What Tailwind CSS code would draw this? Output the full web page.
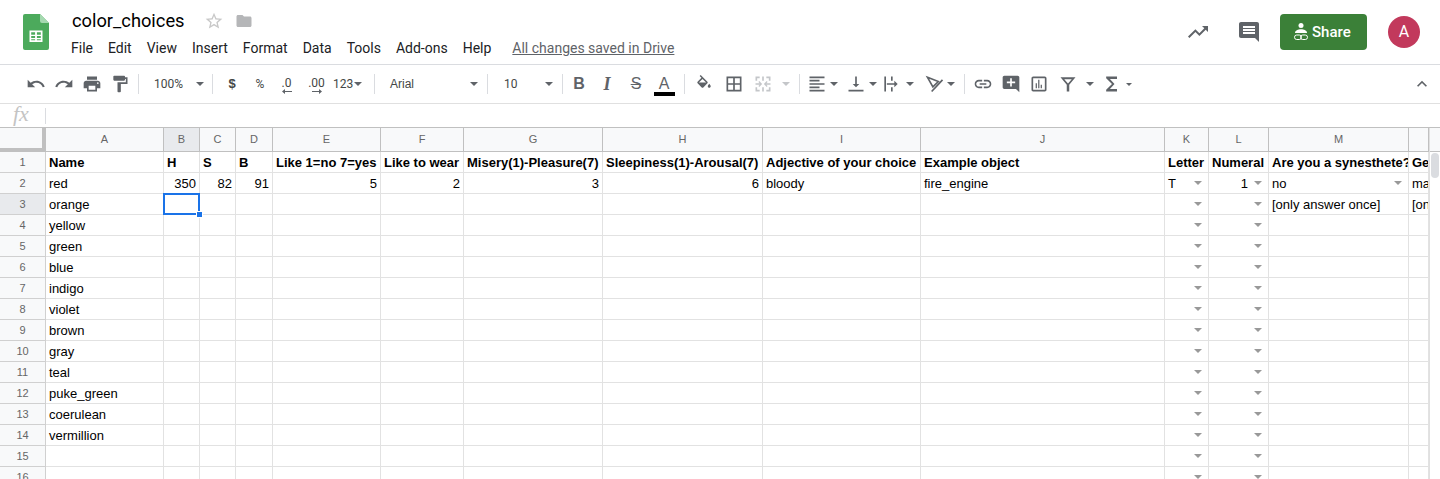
<!DOCTYPE html>
<html lang="en">
<head>
  <meta charset="UTF-8" />
  <title>color_choices</title>
  <script src="https://cdn.jsdelivr.net/npm/@tailwindcss/browser@4"></script>
</head>
<body class="bg-white h-[479px] overflow-hidden font-['Roboto',sans-serif]">

  <!-- title bar -->
  <header class="h-[65px] flex border-b border-[#dadce0]">
    <div class="w-[71px] pl-[23px] pt-[14px] shrink-0">
      <svg width="26" height="36" viewBox="0 0 26 36">
        <path d="M2 0H17L26 9V34a2 2 0 0 1-2 2H2a2 2 0 0 1-2-2V2a2 2 0 0 1 2-2z" fill="#4caa5c"/>
        <path d="M17 0L26 9H19a2 2 0 0 1-2-2z" fill="#a5d9b0"/>
        <path d="M6.5 16.5H19.5V28H6.5zM8.200 18.200V20.800H12.100V18.200zM13.900 18.200V20.800H17.800V18.200zM8.200 22V24H12.100V22zM13.900 22V24H17.800V22zM8.200 25.200V26.300H12.100V25.200zM13.900 25.200V26.300H17.800V25.200z" fill="#fff" fill-rule="evenodd"/>
      </svg>
    </div>
    <div class="flex-1">
      <div class="h-[25px] mt-[8px] flex items-center pl-[1px]">
        <span class="text-[18.3px] text-black w-[132px]">color_choices</span>
        <svg class="w-[20px] h-[20px] mr-[11px]" viewBox="0 0 24 24" fill="#c8c8c8"><path d="M22 9.240l-7.190-.620L12 2 9.190 8.630 2 9.240l5.460 4.730L5.820 21 12 17.270 18.180 21l-1.630-7.030L22 9.240zM12 15.400l-3.760 2.270 1-4.280-3.320-2.880 4.380-.380L12 6.100l1.710 4.040 4.380.380-3.320 2.880 1 4.280L12 15.400z"/></svg>
        <svg class="w-[18px] h-[18px]" viewBox="0 0 24 24" fill="#b5b6b8"><path d="M10 4H4c-1.100 0-2 .9-2 2v12c0 1.100.9 2 2 2h16c1.100 0 2-.9 2-2V8c0-1.100-.9-2-2-2h-8l-2-2z"/></svg>
      </div>
      <nav class="flex items-center gap-[15px] text-[14px] text-[#202124] h-[18px] mt-[6px]">
        <span>File</span><span>Edit</span><span>View</span><span>Insert</span><span>Format</span><span>Data</span><span>Tools</span><span>Add-ons</span><span>Help</span>
        <span class="ml-[6px] underline text-[#5f6368]">All changes saved in Drive</span>
      </nav>
    </div>
    <div class="flex items-center shrink-0 h-[64px]">
      <svg class="w-[24px] h-[24px] mr-[27px]" viewBox="0 0 24 24" fill="#5f6368"><path d="M16 6l2.290 2.290-4.880 4.880-4-4L2 16.590 3.410 18l6-6 4 4 6.300-6.290L22 12V6z"/></svg>
      <svg class="w-[24px] h-[24px] mr-[19px]" viewBox="0 0 24 24" fill="#5f6368"><path d="M21.990 4c0-1.100-.890-2-1.990-2H4c-1.100 0-2 .9-2 2v12c0 1.100.9 2 2 2h14l4 4-.010-18zM18 14H6v-2h12v2zm0-3H6V9h12v2zm0-3H6V6h12v2z"/></svg>
      <button class="w-[87px] h-[36px] rounded-[4px] bg-[#3b8038] text-white text-[15px] font-medium flex items-center pl-[12px] gap-[2px] mr-[21px]">
        <svg width="18" height="20" viewBox="0 0 18 20" fill="none">
          <circle cx="9" cy="3.500" r="2.500" fill="#fff"/>
          <path d="M3 11c0-2.500 3-3.700 6-3.700s6 1.200 6 3.700z" fill="#fff"/>
          <rect x="2.500" y="13" width="7" height="4.500" rx="2.200" stroke="#fff"/>
          <rect x="8.500" y="13" width="7" height="4.500" rx="2.200" stroke="#fff"/>
        </svg>
        Share
      </button>
      <div class="w-[32px] h-[32px] mr-[20px] rounded-full bg-[#c2395c] text-white text-[16px] flex items-center justify-center">A</div>
    </div>
  </header>

  <!-- toolbar -->
  <div class="h-[39px] pl-[22px] flex items-center border-b border-[#e0e0e0] text-[#444746] text-[12px]">
    <span class="w-[28px] flex justify-center"><svg class="w-[20px] h-[20px]" viewBox="0 0 24 24" fill="#5f6368"><path d="M12.500 8c-2.650 0-5.050.990-6.900 2.600L2 7v9h9l-3.620-3.620c1.390-1.160 3.160-1.880 5.120-1.880 3.540 0 6.550 2.310 7.600 5.500l2.370-.780C21.080 11.030 17.150 8 12.500 8z"/></svg></span>
    <span class="w-[28px] flex justify-center"><svg class="w-[20px] h-[20px]" viewBox="0 0 24 24" fill="#5f6368"><path d="M18.400 10.600C16.550 8.990 14.150 8 11.500 8c-4.650 0-8.580 3.030-9.960 7.220L3.900 16c1.050-3.190 4.050-5.500 7.600-5.500 1.950 0 3.730.720 5.120 1.880L13 16h9V7l-3.600 3.600z"/></svg></span>
    <span class="w-[28px] flex justify-center"><svg class="w-[20px] h-[20px]" viewBox="0 0 24 24" fill="#5f6368"><path d="M19 8H5c-1.660 0-3 1.340-3 3v6h4v4h12v-4h4v-6c0-1.660-1.340-3-3-3zm-3 11H8v-5h8v5zm3-7c-.550 0-1-.450-1-1s.450-1 1-1 1 .450 1 1-.450 1-1 1zm-1-9H6v4h12V3z"/></svg></span>
    <span class="w-[28px] flex justify-center"><svg class="w-[20px] h-[20px]" viewBox="0 0 24 24" fill="#5f6368"><path d="M18 4V3c0-.550-.450-1-1-1H5c-.550 0-1 .450-1 1v4c0 .550.450 1 1 1h12c.550 0 1-.450 1-1V6h1v4H9v11c0 .550.450 1 1 1h2c.550 0 1-.450 1-1v-9h8V4h-3z"/></svg></span>
    <i class="ml-[4px] w-px h-[20px] bg-[#dadce0]"></i>
    <span class="w-[73px] flex items-center justify-between pl-[15px] pr-[8px]"><span>100%</span><i class="w-0 h-0 border-x-[4px] border-x-transparent border-t-[4px] border-t-[#5f6368]"></i></span>
    <i class="w-px h-[20px] bg-[#dadce0]"></i>
    <span class="w-[32px] text-center ml-[3px] font-['Liberation_Sans',sans-serif] text-[13px] font-bold">$</span>
    <span class="w-[24px] text-center">%</span>
    <span class="w-[29px] flex flex-col items-center leading-[11px] pt-[3px]">.0<svg width="10" height="5" viewBox="0 0 10 5" fill="#5f6368"><path d="M0 2.500L3 0v2h7v1H3v2z"/></svg></span>
    <span class="w-[31px] flex flex-col items-center leading-[11px] pt-[3px]">.00<svg width="10" height="5" viewBox="0 0 10 5" fill="#5f6368"><path d="M10 2.500L7 0v2H0v1h7v2z"/></svg></span>
    <span class="w-[42px] flex items-center pl-[1px] gap-[1px]">123<i class="w-0 h-0 border-x-[4px] border-x-transparent border-t-[4px] border-t-[#5f6368]"></i></span>
    <i class="w-px h-[20px] bg-[#dadce0]"></i>
    <span class="w-[112px] flex items-center justify-between pl-[15px] pr-[9px] font-['Liberation_Sans',sans-serif]"><span>Arial</span><i class="w-0 h-0 border-x-[4px] border-x-transparent border-t-[4px] border-t-[#5f6368]"></i></span>
    <i class="w-px h-[20px] bg-[#dadce0]"></i>
    <span class="w-[74px] flex items-center justify-between pl-[16px] pr-[9px]"><span>10</span><i class="w-0 h-0 border-x-[4px] border-x-transparent border-t-[4px] border-t-[#5f6368]"></i></span>
    <i class="w-px h-[20px] bg-[#dadce0]"></i>
    <span class="w-[32px] text-center text-[#5f6368] font-['Liberation_Sans',sans-serif] font-bold text-[16px]">B</span>
    <span class="w-[24px] text-center text-[#5f6368] font-['Liberation_Serif',serif] italic font-bold text-[18px]">I</span>
    <span class="w-[34px] text-center text-[#5f6368] font-['Liberation_Sans',sans-serif] line-through text-[16px]">S</span>
    <span class="w-[22px] flex flex-col items-center text-[#5f6368] font-['Liberation_Sans',sans-serif] text-[16px] leading-[17px] pt-[2px]">A<i class="w-[21px] h-[4px] bg-black"></i></span>
    <i class="ml-[9px] w-px h-[20px] bg-[#dadce0]"></i>
    <span class="w-[38px] flex justify-center"><svg class="w-[18px] h-[18px]" viewBox="0 0 24 24" fill="#5f6368"><path d="M16.560 8.940L7.620 0 6.210 1.410l2.380 2.380-5.150 5.150c-.590.590-.590 1.540 0 2.120l5.500 5.500c.290.290.680.440 1.060.440s.770-.150 1.060-.440l5.500-5.500c.590-.580.590-1.530 0-2.120zM5.210 10L10 5.210 14.790 10H5.210zM19 11.500s-2 2.170-2 3.500c0 1.100.9 2 2 2s2-.9 2-2c0-1.330-2-3.500-2-3.500z"/></svg></span>
    <span class="w-[22px] flex justify-center"><svg class="w-[20px] h-[20px] shrink-0" viewBox="0 0 24 24" fill="#5f6368"><path d="M3 3h18v18H3zM5 5v6h6V5zM13 5v6h6V5zM5 13v6h6v-6zM13 13v6h6v-6z" fill-rule="evenodd"/></svg></span>
    <span class="w-[36px] flex justify-center"><svg class="w-[20px] h-[20px]" viewBox="0 0 24 24" fill="#c4c6c9"><path d="M3 3h5v2H5v3H3zM16 3h5v5h-2V5h-3zM3 16h2v3h3v2H3zM19 16h2v5h-5v-2h3zM11 3h2v5h-2zM11 16h2v5h-2zM3 11h5l-1.500-1.500 1-1L11 12l-3.500 3.500-1-1L8 13H3zM21 11h-5l1.500-1.500-1-1L13 12l3.500 3.500 1-1L16 13h5z"/></svg></span>
    <span class="w-[10px] flex justify-center"><i class="w-0 h-0 border-x-[4px] border-x-transparent border-t-[4px] border-t-[#c4c6c9]"></i></span>
    <i class="ml-[8px] w-px h-[20px] bg-[#dadce0]"></i>
    <span class="w-[27px] flex justify-end"><svg class="w-[20px] h-[20px]" viewBox="0 0 24 24" fill="#5f6368"><path d="M3 3h18v2H3zM3 7h12v2H3zM3 11h18v2H3zM3 15h12v2H3zM3 19h18v2H3z"/></svg></span>
    <span class="w-[11px] flex justify-end"><i class="w-0 h-0 border-x-[4px] border-x-transparent border-t-[4px] border-t-[#5f6368]"></i></span>
    <span class="w-[28px] flex justify-end"><svg class="w-[20px] h-[20px]" viewBox="0 0 24 24" fill="#5f6368"><path d="M3 19h18v2H3zM11 3h2v9h3l-4 4-4-4h3z"/></svg></span>
    <span class="w-[11px] flex justify-end"><i class="w-0 h-0 border-x-[4px] border-x-transparent border-t-[4px] border-t-[#5f6368]"></i></span>
    <span class="w-[24px] flex justify-end"><svg class="w-[20px] h-[20px]" viewBox="0 0 24 24" fill="#5f6368"><path d="M4 3h2v18H4zM12 3h2v5h-2zM12 16h2v5h-2zM7 11h9V8l4 4-4 4v-3H7z"/></svg></span>
    <span class="w-[13px] flex justify-end"><i class="w-0 h-0 border-x-[4px] border-x-transparent border-t-[4px] border-t-[#5f6368]"></i></span>
    <span class="w-[31px] flex justify-end"><svg class="w-[20px] h-[20px]" viewBox="0 0 24 24" fill="none" stroke="#5f6368" stroke-width="2"><path d="M3 4l13 5-6.500 6.500z"/><path d="M21 7L8 21"/></svg></span>
    <span class="w-[10px] flex justify-end"><i class="w-0 h-0 border-x-[4px] border-x-transparent border-t-[4px] border-t-[#5f6368]"></i></span>
    <i class="ml-[9px] w-px h-[20px] bg-[#dadce0]"></i>
    <span class="w-[36px] flex justify-center"><svg class="w-[20px] h-[20px]" viewBox="0 0 24 24" fill="#5f6368"><path d="M3.900 12c0-1.710 1.390-3.100 3.100-3.100h4V7H7c-2.760 0-5 2.240-5 5s2.240 5 5 5h4v-1.900H7c-1.710 0-3.100-1.390-3.100-3.100zM8 13h8v-2H8v2zm9-6h-4v1.900h4c1.710 0 3.100 1.390 3.100 3.100s-1.390 3.100-3.100 3.100h-4V17h4c2.760 0 5-2.240 5-5s-2.240-5-5-5z"/></svg></span>
    <span class="w-[20px] flex justify-center"><svg class="w-[20px] h-[20px] shrink-0" viewBox="0 0 24 24" fill="#5f6368"><path d="M21.990 4c0-1.100-.890-2-1.990-2H4c-1.100 0-2 .9-2 2v12c0 1.100.9 2 2 2h14l4 4-.010-18zM17 11h-4v4h-2v-4H7V9h4V5h2v4h4v2z"/></svg></span>
    <span class="w-[36px] flex justify-center"><svg class="w-[20px] h-[20px]" viewBox="0 0 24 24" fill="#5f6368"><path d="M19 3H5c-1.100 0-2 .9-2 2v14c0 1.100.9 2 2 2h14c1.100 0 2-.9 2-2V5c0-1.100-.9-2-2-2zm0 16H5V5h14v14zM8 11h1.500v6H8zm3-4h1.500v10H11zm3 6h1.500v4H14z"/></svg></span>
    <span class="w-[22px] flex justify-center"><svg class="w-[20px] h-[20px] shrink-0" viewBox="0 0 24 24" fill="#5f6368"><path d="M3 4h18l-7.500 9v8h-3v-8zM7.500 6.200L12 11.500l4.500-5.300z" fill-rule="evenodd"/></svg></span>
    <span class="w-[15px] flex justify-end"><i class="w-0 h-0 border-x-[4px] border-x-transparent border-t-[4px] border-t-[#5f6368]"></i></span>
    <span class="w-[28px] flex justify-end"><svg class="w-[20px] h-[20px]" viewBox="0 0 24 24" fill="#5f6368"><path d="M18 3H5v2l7 7-7 7v2h13v-3h-8.500l5.500-6-5.500-6H18z"/></svg></span>
    <span class="w-[10px] flex justify-end"><i class="w-0 h-0 border-x-[3px] border-x-transparent border-t-[3px] border-t-[#5f6368]"></i></span>
    <span class="ml-auto mr-[8px] flex"><svg class="w-[20px] h-[20px]" viewBox="0 0 24 24" fill="#5f6368"><path d="M12 8l-6 6 1.410 1.410L12 10.830l4.590 4.580L18 14z"/></svg></span>
  </div>

  <!-- formula bar -->
  <div class="h-[24px] flex items-center border-b border-[#c0c0c0]">
    <span class="w-[45px] pl-[13px] pb-[3px] font-['Liberation_Serif',serif] italic text-[22px] leading-[22px] text-[#c4c4c4]">fx</span>
    <i class="w-px h-[16px] bg-[#dadce0]"></i>
  </div>

  <!-- sheet -->
  <div class="flex">
    <div id="sheet" class="relative grid w-[1429px] grid-cols-[46px_118px_36px_36px_37px_108px_83px_139px_160px_158px_244px_44px_60px_140px_20px] grid-rows-[24px] auto-rows-[21px] font-['Liberation_Sans',sans-serif] text-[13px] text-black"></div>
    <div class="flex-1 bg-white border-l border-[#e0e0e0]">
      <div class="h-[24px] bg-[#f8f9fa] border-b border-[#c0c0c0]"></div>
      <div class="mt-[1px] mx-[1px] h-[25px] rounded-[4px] bg-[#dadce0]"></div>
    </div>
  </div>

  <script>
    // header row, first data row and the names down column A
    const columns = ['A','B','C','D','E','F','G','H','I','J','K','L','M','N'];
    const titles = ['Name','H','S','B','Like 1=no 7=yes','Like to wear','Misery(1)-Pleasure(7)','Sleepiness(1)-Arousal(7)','Adjective of your choice','Example object','Letter','Numeral','Are you a synesthete?','Gender'];
    const firstRow = ['red','350','82','91','5','2','3','6','bloody','fire_engine','T','1','no','male'];
    const secondRow = { 12: '[only answer once]', 13: '[only answer once]' };
    const names = ['orange','yellow','green','blue','indigo','violet','brown','gray','teal','puke_green','coerulean','vermillion'];
    const numeric = [1,2,3,4,5,6,7,11];

    const cellBase = 'relative whitespace-nowrap overflow-hidden px-[3px] leading-[22px] border-r border-b border-[#e2e2e2]';
    const headBase = 'flex items-center justify-center text-[11px] text-[#666] border-r border-b border-[#c0c0c0]';
    const rowBase = 'flex items-center justify-center text-[11px] text-[#666] border-r border-b border-[#d0d0d0]';
    const arrow = '<i class="absolute right-[6px] top-[8px] w-0 h-0 border-x-[4px] border-x-transparent border-t-[4px] border-t-[#999]"></i>';

    let html = '<div class="bg-[#f8f9fa] border-b-[4px] border-r-[4px] border-[#c0c0c0]"></div>';
    columns.forEach(c => {
      html += `<div class="${headBase} ${c === 'B' ? 'bg-[#e8eaed]' : 'bg-[#f8f9fa]'}">${c === 'N' ? '' : c}</div>`;
    });

    for (let row = 1; row <= 16; row++) {
      html += `<div class="${rowBase} ${row === 3 ? 'bg-[#e8eaed]' : 'bg-[#f8f9fa]'}">${row}</div>`;
      columns.forEach((c, i) => {
        let text = '';
        if (row === 1) text = titles[i];
        if (row === 2) text = firstRow[i];
        if (row === 3) text = secondRow[i] || '';
        if (row >= 3 && i === 0) text = names[row - 3] || '';

        let cls = cellBase;
        if (row === 1) cls += ' font-bold';
        if (row === 2 && numeric.includes(i)) cls += (i === 11 ? ' text-right pr-[20px]' : ' text-right');

        let extra = '';
        if (row >= 2 && (i === 10 || i === 11)) extra = arrow;
        if (row === 2 && i === 12) extra = arrow;
        html += `<div class="${cls}">${text}${extra}</div>`;
      });
    }
    // selected cell and its fill handle
    html += '<div class="absolute left-[163px] top-[65px] w-[37px] h-[22px] border-2 border-[#1a73e8]"></div>';
    html += '<div class="absolute left-[196px] top-[83px] w-[7px] h-[7px] bg-[#1a73e8] border border-white"></div>';
    document.getElementById('sheet').innerHTML = html;
  </script>
</body>
</html>
